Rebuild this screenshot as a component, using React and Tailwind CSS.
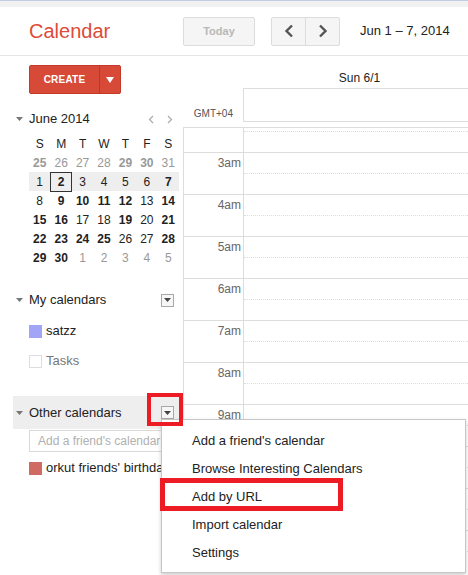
const DownTri = ({ className = '' }) => (
  <svg width="7" height="4" viewBox="0 0 7 4" className={className}>
    <path d="M0 0h7L3.5 4z" fill="currentColor" />
  </svg>
);

const Chevron = ({ dir, size = 'lg' }) => {
  const big = size === 'lg';
  const w = big ? 10 : 6;
  const h = big ? 14 : 9;
  const d = big
    ? dir === 'left' ? 'M8 1.5L2.5 7L8 12.5' : 'M2 1.5L7.5 7L2 12.5'
    : dir === 'left' ? 'M5 1L1.5 4.5L5 8' : 'M1 1L4.5 4.5L1 8';
  return (
    <svg width={w} height={h} viewBox={`0 0 ${w} ${h}`}>
      <path d={d} fill="none" stroke="currentColor" strokeWidth={big ? 2.4 : 1.2} />
    </svg>
  );
};

const MenuBox = () => (
  <div className="ml-auto mr-[9px] w-[13px] h-[13px] border border-[#a8a8a8] bg-[#f6f6f6] flex items-center justify-center text-[#444]">
    <DownTri />
  </div>
);

// g = other month, b = bold (has events), t = today
const weeks = [
  ['25gb', '26g', '27g', '28g', '29gb', '30gb', '31g'],
  ['1', '2tb', '3', '4', '5', '6', '7b'],
  ['8', '9b', '10b', '11b', '12b', '13', '14b'],
  ['15b', '16b', '17', '18', '19b', '20', '21b'],
  ['22b', '23b', '24b', '25b', '26', '27', '28b'],
  ['29b', '30b', '1g', '2g', '3g', '4g', '5g'],
];

// rows below 9am sit under the open menu, so their labels are left out
const hours = ['3am', '4am', '5am', '6am', '7am', '8am', '9am', '', '', ''];

const menuItems = [
  "Add a friend's calendar",
  'Browse Interesting Calendars',
  'Add by URL',
  'Import calendar',
  'Settings',
];

function MiniCalendar() {
  return (
    <div className="ml-[29px] w-[150px] mt-[5px] text-[12px]">
      <div className="grid grid-cols-7 h-[19px] items-center text-center text-[#222]">
        {['S', 'M', 'T', 'W', 'T', 'F', 'S'].map((d, i) => (
          <span key={i}>{d}</span>
        ))}
      </div>
      {weeks.map((week, wi) => (
        <div key={wi} className={`grid grid-cols-7 h-[19px] text-center ${wi === 1 ? 'bg-[#eeeeee]' : ''}`}>
          {week.map((day) => {
            const num = day.replace(/[a-z]/g, '');
            const gray = day.includes('g');
            const bold = day.includes('b');
            const today = day.includes('t');
            return (
              <span
                key={day}
                className={`flex items-center justify-center ${gray ? 'text-[#999]' : 'text-[#222]'} ${bold ? 'font-bold' : ''} ${today ? 'border border-[#333]' : ''}`}
              >
                {num}
              </span>
            );
          })}
        </div>
      ))}
    </div>
  );
}

function Sidebar() {
  return (
    <div className="w-[183px] shrink-0 flex flex-col text-[13px] text-[#222]">
      <div className="ml-[29px] mt-[9px] w-[92px] h-[29px] flex rounded-[2px] bg-[#d84a38] border border-[#c53929] text-white">
        <div className="w-[70px] flex items-center justify-center text-[10px] font-bold tracking-[0.2px] border-r border-[#b8382a]">
          CREATE
        </div>
        <div className="flex-1 flex items-center justify-center">
          <svg width="8" height="6" viewBox="0 0 8 6">
            <path d="M0 0h8L4 6z" fill="white" />
          </svg>
        </div>
      </div>

      <div className="mt-[15px] h-[20px] flex items-center">
        <DownTri className="ml-[16px] text-[#777]" />
        <span className="ml-[6px]">June 2014</span>
        <div className="ml-auto mr-[10px] flex gap-[13px] text-[#aaa]">
          <Chevron dir="left" size="sm" />
          <Chevron dir="right" size="sm" />
        </div>
      </div>

      <MiniCalendar />

      <div className="mt-[23px] h-[20px] flex items-center">
        <DownTri className="ml-[16px] text-[#777]" />
        <span className="ml-[6px]">My calendars</span>
        <MenuBox />
      </div>
      <div className="mt-[11px] h-[20px] flex items-center">
        <span className="ml-[29px] w-[13px] h-[13px] bg-[#a2a5f6]" />
        <span className="ml-[4px]">satzz</span>
      </div>
      <div className="mt-[10px] h-[20px] flex items-center">
        <span className="ml-[29px] w-[13px] h-[13px] border border-[#dddddd]" />
        <span className="ml-[4px] text-[#777]">Tasks</span>
      </div>

      <div className="mt-[25px] ml-[13px] h-[33px] flex items-center bg-[#eeeeee]">
        <DownTri className="ml-[3px] text-[#777]" />
        <span className="ml-[6px]">Other calendars</span>
        <MenuBox />
      </div>
      <div className="mt-[1px] ml-[29px] w-[148px] h-[22px] border border-[#d9d9d9] flex items-center pl-[8px] text-[12px] text-[#b0b0b0] whitespace-nowrap overflow-hidden">
        Add a friend's calendar
      </div>
      <div className="mt-[6px] h-[20px] flex items-center whitespace-nowrap">
        <span className="ml-[29px] w-[13px] h-[13px] bg-[#d06b64] shrink-0" />
        <span className="ml-[4px]">orkut friends' birthdays</span>
      </div>
    </div>
  );
}

function WeekGrid() {
  return (
    <div className="flex-1 overflow-hidden">
      <div className="h-[32px] flex">
        <div className="w-[60px] shrink-0" />
        <div className="w-[233px] shrink-0 pt-[13px] text-center text-[12px] text-[#222]">Sun 6/1</div>
      </div>
      <div className="h-[34px] flex">
        <div className="w-[60px] shrink-0 flex items-end justify-end pr-[10px] pb-[1px] text-[10px] text-[#555]">GMT+04</div>
        <div className="w-[240px] shrink-0 border border-[#dddddd]" />
      </div>
      <div className="mt-[5px] border-t border-[#dddddd]">
        <div className="h-[24px] flex">
          <div className="w-[60px] shrink-0 border-l border-[#dddddd]" />
          <div className="flex-1 border-l border-[#dddddd] pt-[3px]">
            <div className="border-t border-dotted border-[#dddddd]" />
          </div>
        </div>
        {hours.map((h, i) => (
          <div key={i} className="h-[42px] flex border-t border-[#dddddd]">
            <div className="w-[60px] shrink-0 border-l border-[#dddddd] text-right pr-[2px] pt-[1px] text-[12px] text-[#666]">
              {h}
            </div>
            <div className="flex-1 border-l border-[#dddddd] pt-[20px]">
              <div className="border-t border-dotted border-[#dddddd]" />
            </div>
          </div>
        ))}
      </div>
    </div>
  );
}

export default function App() {
  return (
    <div className="relative w-[468px] h-[575px] overflow-hidden bg-white font-['Liberation_Sans',Arial,sans-serif]">
      <div className="h-[7px] bg-[#f1f1f1] border-t border-[#c3cde0]" />

      <div className="h-[49px] flex items-center border-b border-[#e5e5e5]">
        <div className="w-[183px] pl-[29px] text-[20px] text-[#dd4b39]">Calendar</div>
        <div className="w-[72px] h-[29px] flex items-center justify-center rounded-[2px] bg-[#f5f5f5] border border-[#dcdcdc] text-[11px] font-bold text-[#b8b8b8]">
          Today
        </div>
        <div className="ml-[16px] w-[69px] h-[29px] flex rounded-[2px] bg-[#f5f5f5] border border-[#dcdcdc] text-[#555]">
          <div className="w-[34px] flex items-center justify-center border-r border-[#dcdcdc]">
            <Chevron dir="left" />
          </div>
          <div className="flex-1 flex items-center justify-center">
            <Chevron dir="right" />
          </div>
        </div>
        <div className="ml-[20px] text-[13px] text-[#222] whitespace-nowrap">Jun 1 – 7, 2014</div>
      </div>

      <div className="flex">
        <Sidebar />
        <WeekGrid />
      </div>

      {/* dropdown menu for Other calendars */}
      <div className="absolute left-[161px] top-[419px] w-[305px] h-[154px] bg-white border border-[#c6c6c6] shadow-[0_2px_4px_rgba(0,0,0,0.2)] py-[7px] text-[13px] text-[#222]">
        {menuItems.map((m) => (
          <div key={m} className="h-[28px] flex items-center pl-[30px] whitespace-nowrap">
            {m}
          </div>
        ))}
      </div>

      {/* red highlight boxes */}
      <div className="absolute left-[147px] top-[393px] w-[36px] h-[33px] border-4 border-[#ed1c24]" />
      <div className="absolute left-[160px] top-[478px] w-[183px] h-[33px] border-[5px] border-[#ed1c24]" />
    </div>
  );
}
